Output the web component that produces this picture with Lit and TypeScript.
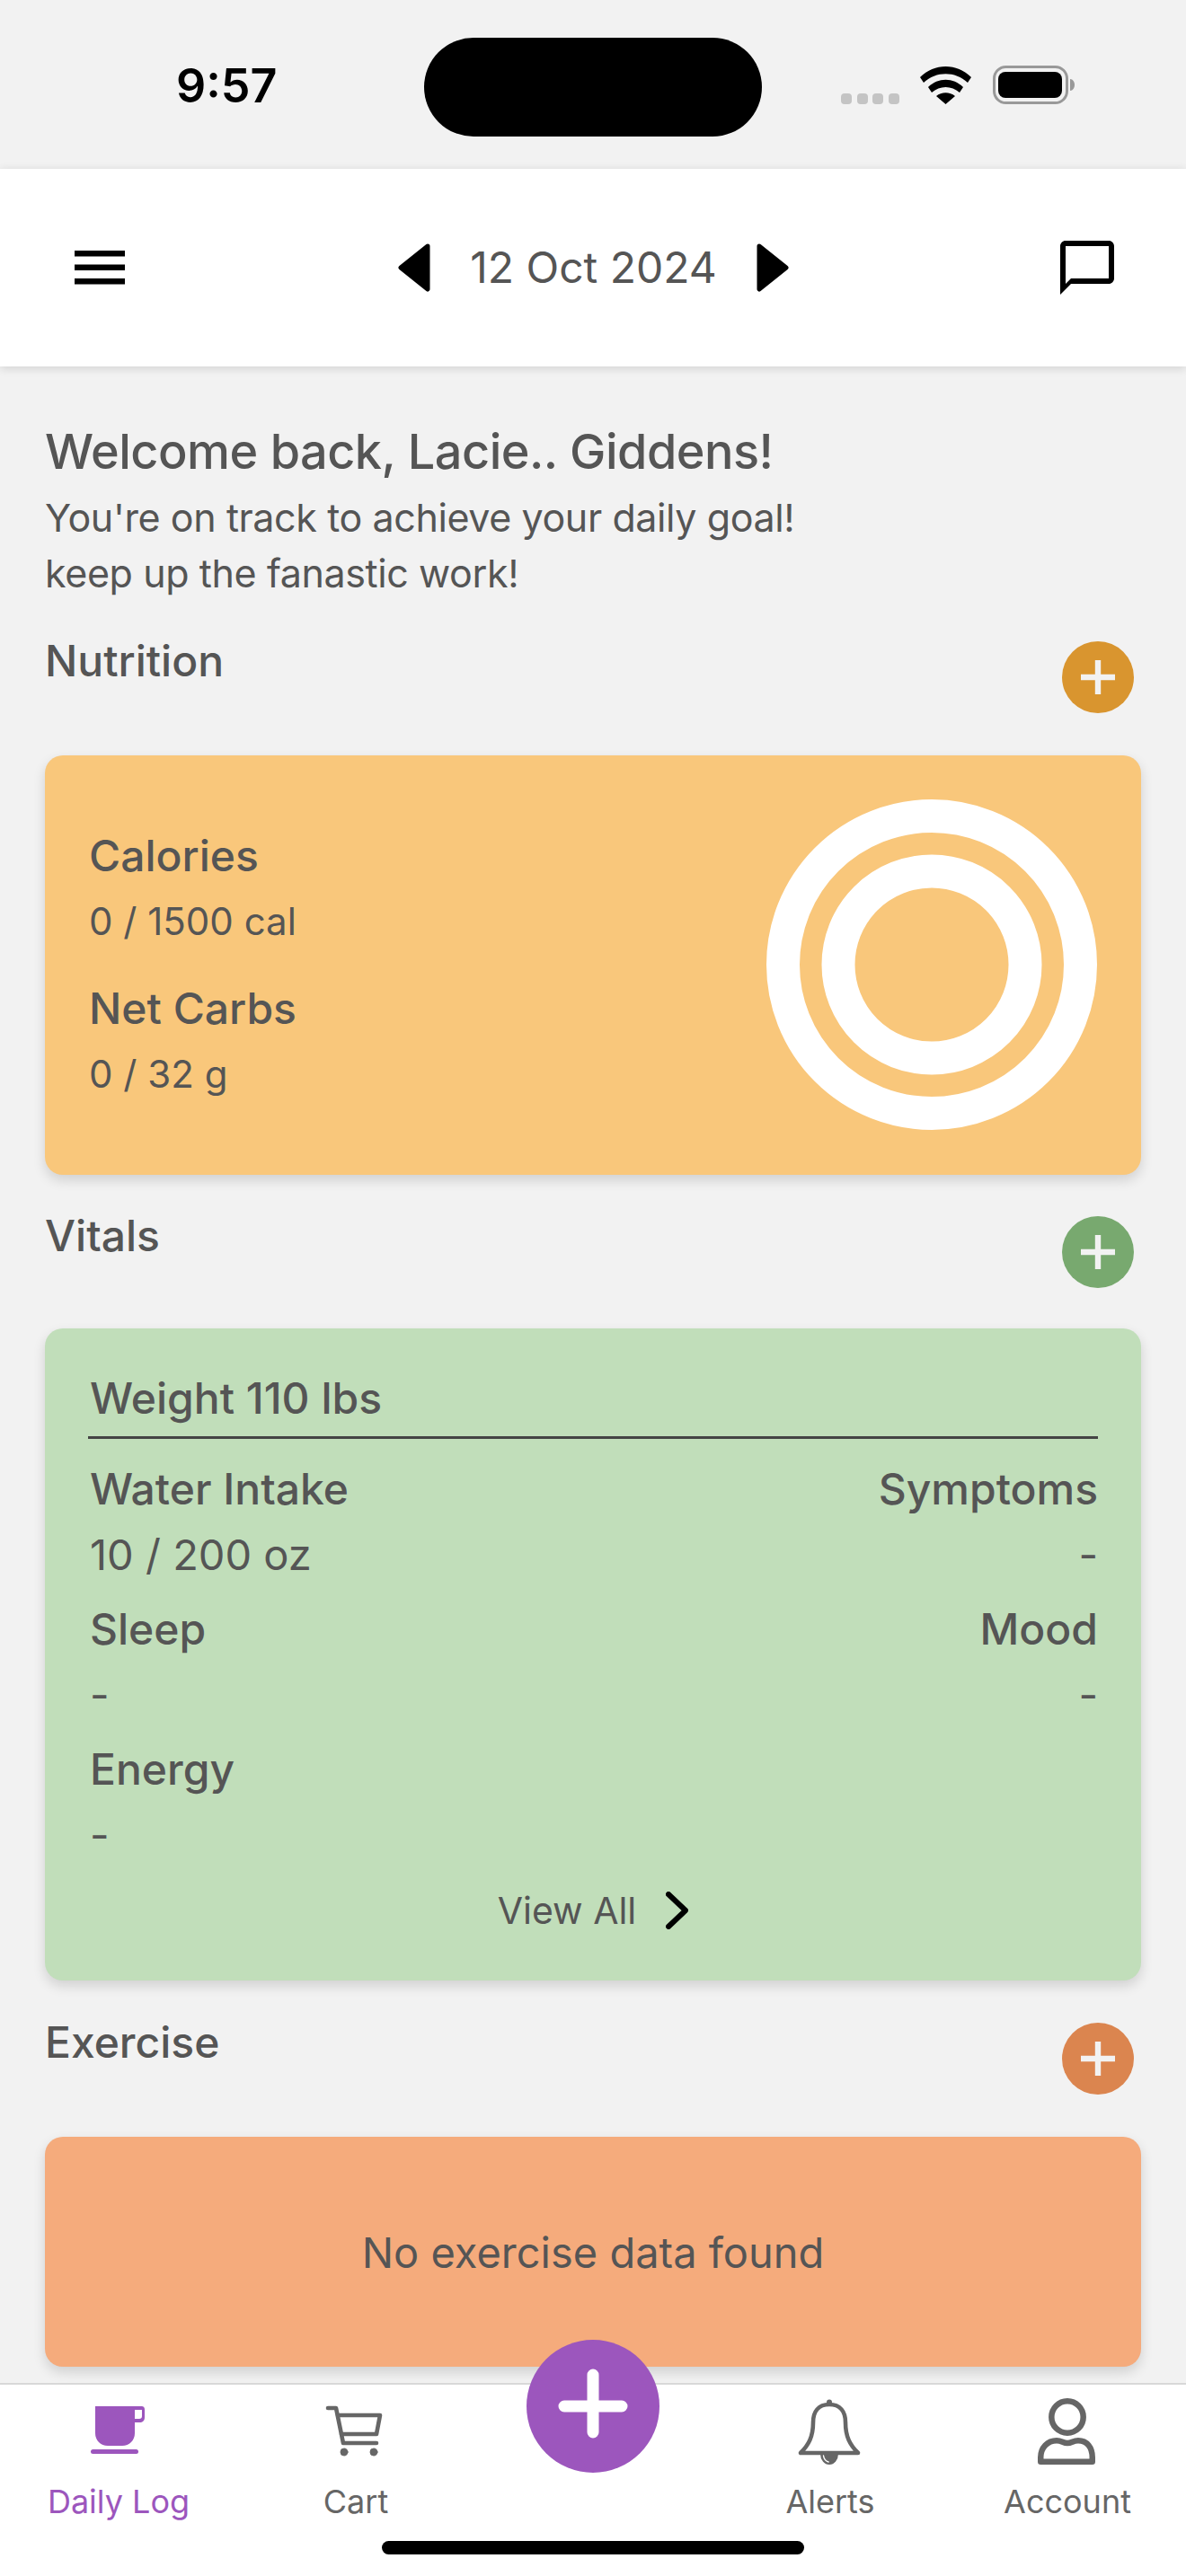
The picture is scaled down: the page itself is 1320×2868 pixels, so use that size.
import { LitElement, html, css, svg } from 'lit';
import { customElement } from 'lit/decorators.js';

const plus = svg`<path d="M20 10.5v19M10.5 20h19" stroke="#f2f2f2" stroke-width="3.2" fill="none" />`;

@customElement('app-root')
export class AppRoot extends LitElement {
  static styles = css`
    :host {
      display: block;
      width: 1320px;
      height: 2868px;
      position: relative;
      overflow: hidden;
      background: #f2f2f2;
      font-family: Inter, sans-serif;
      color: #555;
    }
    .page {
      display: flex;
      flex-direction: column;
      height: 2868px;
    }

    /* status bar */
    .status {
      height: 188px;
      flex: none;
      display: flex;
      position: relative;
      padding: 73px 121px 0 196px;
      box-sizing: border-box;
      justify-content: space-between;
    }
    .time {
      font-size: 52px;
      font-weight: 600;
      line-height: 46px;
      color: #000;
    }
    .island {
      position: absolute;
      left: 472px;
      top: 42px;
      width: 376px;
      height: 110px;
      border-radius: 55px;
      background: #000;
    }
    .status-icons {
      display: flex;
      align-items: flex-start;
    }
    .status-icons svg {
      display: block;
    }

    /* header */
    .header {
      height: 220px;
      flex: none;
      background: #fff;
      box-shadow: 0 2px 10px rgba(0, 0, 0, 0.14);
      display: flex;
      align-items: center;
      justify-content: space-between;
      padding: 0 74px 0 83px;
      box-sizing: border-box;
      position: relative;
      z-index: 1;
    }
    .header svg {
      display: block;
    }
    .date-nav {
      display: flex;
      align-items: center;
      gap: 44px;
      margin-left: 8px;
    }
    .date {
      font-size: 48px;
      line-height: 60px;
    }

    /* content */
    .content {
      flex: 1;
      min-height: 0;
      overflow: hidden;
      padding: 64px 50px 0;
    }
    h1 {
      margin: 0;
      font-size: 54px;
      font-weight: 500;
      line-height: 62px;
      letter-spacing: -0.5px;
    }
    .intro {
      margin: 11px 0 37px;
      font-size: 43px;
      line-height: 62px;
      letter-spacing: -0.4px;
    }
    .section-head {
      display: flex;
      justify-content: space-between;
      align-items: flex-start;
      margin-bottom: 47px;
      padding-right: 8px;
    }
    .section-title {
      font-size: 48px;
      font-weight: 500;
      line-height: 60px;
    }
    .add {
      width: 80px;
      height: 80px;
      margin-top: 8px;
      border-radius: 50%;
      display: block;
    }
    .card {
      border-radius: 20px;
      box-shadow: 0 6px 14px rgba(0, 0, 0, 0.14);
      box-sizing: border-box;
      margin-bottom: 38px;
    }
    .label {
      font-size: 48px;
      font-weight: 500;
      line-height: 60px;
    }
    .value {
      font-size: 47px;
      line-height: 60px;
    }

    .nutrition {
      background: #f9c77b;
      height: 467px;
      padding: 0 49px;
      display: flex;
      align-items: center;
      justify-content: space-between;
    }
    .nutrition .value {
      font-size: 42px;
      margin: 13px 0 37px;
    }
    .nutrition .stat:last-child .value {
      margin-bottom: 0;
    }
    .ring {
      display: block;
      margin-top: -2px;
    }

    .vitals-head {
      margin-bottom: 45px;
    }
    .vitals {
      background: #c1deba;
      height: 726px;
      margin-bottom: 39px;
      padding: 48px 48px 0;
    }
    .weight {
      padding-left: 2px;
      padding-bottom: 12px;
      border-bottom: 3px solid #444;
      margin-bottom: 26px;
    }
    .vitals-grid {
      display: grid;
      grid-template-columns: 1fr 1fr;
      row-gap: 23px;
      padding-left: 2px;
    }
    .vitals .value {
      margin-top: 13px;
    }
    .right {
      text-align: right;
    }
    .view-all {
      display: flex;
      align-items: center;
      justify-content: center;
      gap: 33px;
      margin-top: 24px;
      font-size: 41px;
      line-height: 60px;
    }
    .view-all svg {
      display: block;
    }

    .exercise-head {
      margin-bottom: 47px;
    }
    .exercise {
      background: #f5ab7c;
      height: 256px;
      display: flex;
      align-items: center;
      justify-content: center;
      font-size: 47px;
      margin-bottom: 0;
    }

    /* tab bar */
    .tabs {
      height: 215px;
      flex: none;
      background: #fff;
      border-top: 2px solid #d8d8d8;
      box-sizing: border-box;
      display: grid;
      grid-template-columns: repeat(5, 1fr);
      position: relative;
      z-index: 2;
    }
    .tab {
      display: flex;
      flex-direction: column;
      align-items: center;
      padding-top: 15px;
      font-size: 36px;
      line-height: 46px;
      color: #666;
    }
    .tab.active {
      color: #9c56bd;
    }
    .tab svg {
      display: block;
      width: 78px;
      height: 78px;
      margin-bottom: 14px;
    }
    .fab {
      position: absolute;
      left: 586px;
      top: -50px;
      width: 148px;
      height: 148px;
      border-radius: 50%;
      background: #9c56bd;
    }
    .home-bar {
      position: absolute;
      left: 425px;
      bottom: 24px;
      width: 470px;
      height: 15px;
      border-radius: 8px;
      background: #000;
    }
  `;

  addButton(color: string) {
    return html`<svg class="add" viewBox="0 0 40 40" style="background:${color}">${plus}</svg>`;
  }

  render() {
    return html`
      <div class="page">
        <div class="status">
          <div class="time">9:57</div>
          <div class="island"></div>
          <div class="status-icons">
            <svg width="263" height="46" viewBox="0 0 263 46">
              <g fill="#c4c4c4">
                <rect x="0" y="31" width="12" height="12" rx="4" />
                <rect x="18" y="31" width="12" height="12" rx="4" />
                <rect x="35" y="31" width="12" height="12" rx="4" />
                <rect x="53" y="31" width="12" height="12" rx="4" />
              </g>
              <path
                d="M88 13 C104 -3 129 -3 145 13 L141 19 C127 6 106 6 92 19 Z M97 24 C108 13 125 13 136 24 L132 30 C123 22 110 22 101 30 Z M106 34 C112 29 121 29 127 34 L116.5 43 Z"
                fill="#000"
              />
              <rect x="170.5" y="1.5" width="81" height="40" rx="13" fill="none" stroke="#999" stroke-width="3" />
              <rect x="175" y="7" width="71" height="29" rx="8" fill="#000" />
              <path d="M255 15 c3 0 5 3 5 6.5 s-2 6.5-5 6.5 z" fill="#999" />
            </svg>
          </div>
        </div>

        <div class="header">
          <svg width="56" height="38" viewBox="0 0 56 38">
            <path d="M0 0h56v6.5H0zM0 15.5h56V22H0zM0 31h56v6.5H0z" fill="#000" />
          </svg>
          <div class="date-nav">
            <svg width="36" height="54" viewBox="0 0 36 54">
              <path d="M33 3 L3 27 L33 51 Z" fill="#000" stroke="#000" stroke-width="5" stroke-linejoin="round" />
            </svg>
            <span class="date">12 Oct 2024</span>
            <svg width="36" height="54" viewBox="0 0 36 54">
              <path d="M3 3 L33 27 L3 51 Z" fill="#000" stroke="#000" stroke-width="5" stroke-linejoin="round" />
            </svg>
          </div>
          <svg width="72" height="72" viewBox="0 0 24 24">
            <path
              d="M20 2H4c-1.1 0-2 .9-2 2v18l4-4h14c1.1 0 2-.9 2-2V4c0-1.1-.9-2-2-2zm0 14H6l-2 2V4h16v12z"
              fill="#000"
            />
          </svg>
        </div>

        <div class="content">
          <h1>Welcome back, Lacie.. Giddens!</h1>
          <p class="intro">You're on track to achieve your daily goal!<br />keep up the fanastic work!</p>

          <div class="section-head">
            <span class="section-title">Nutrition</span>
            ${this.addButton('#d9952f')}
          </div>
          <div class="card nutrition">
            <div>
              <div class="stat">
                <div class="label">Calories</div>
                <div class="value">0 / 1500 cal</div>
              </div>
              <div class="stat">
                <div class="label">Net Carbs</div>
                <div class="value">0 / 32 g</div>
              </div>
            </div>
            <svg class="ring" width="368" height="368" viewBox="0 0 368 368" fill="none" stroke="#fff" stroke-width="37">
              <circle cx="184" cy="184" r="165.5" />
              <circle cx="184" cy="184" r="104" />
            </svg>
          </div>

          <div class="section-head vitals-head">
            <span class="section-title">Vitals</span>
            ${this.addButton('#78a96f')}
          </div>
          <div class="card vitals">
            <div class="label weight">Weight 110 lbs</div>
            <div class="vitals-grid">
              <div>
                <div class="label">Water Intake</div>
                <div class="value">10 / 200 oz</div>
              </div>
              <div class="right">
                <div class="label">Symptoms</div>
                <div class="value">-</div>
              </div>
              <div>
                <div class="label">Sleep</div>
                <div class="value">-</div>
              </div>
              <div class="right">
                <div class="label">Mood</div>
                <div class="value">-</div>
              </div>
              <div>
                <div class="label">Energy</div>
                <div class="value">-</div>
              </div>
            </div>
            <div class="view-all">
              <span>View All</span>
              <svg width="25" height="42" viewBox="0 0 25 42">
                <path d="M3 3 L22 21 L3 39" fill="none" stroke="#000" stroke-width="6" stroke-linecap="round" stroke-linejoin="round" />
              </svg>
            </div>
          </div>

          <div class="section-head exercise-head">
            <span class="section-title">Exercise</span>
            ${this.addButton('#db854f')}
          </div>
          <div class="card exercise">No exercise data found</div>
        </div>

        <div class="tabs">
          <div class="tab active">
            <svg viewBox="0 0 78 78">
              <path
                d="M13 9 H64 C67 9 68 10 68 13 V21 C68 25 66 27 62 27 H57 V39 C57 47 51 53 43 53 H27 C19 53 13 47 13 39 Z M57 13 V23 H62 C64 23 65 22 65 20 V13 Z"
                fill="#9c56bd"
                fill-rule="evenodd"
              />
              <rect x="8" y="57" width="53" height="5" rx="2.5" fill="#9c56bd" />
            </svg>
            Daily Log
          </div>
          <div class="tab">
            <svg viewBox="0 0 78 78" fill="none" stroke="#666" stroke-width="4.6" stroke-linecap="round" stroke-linejoin="round">
              <path d="M8 11 H17 L25 50 H62" />
              <path d="M19 19 H66 L62 40 H23" />
              <circle cx="26" cy="60" r="4" fill="#666" stroke-width="1" />
              <circle cx="59" cy="60" r="4" fill="#666" stroke-width="1" />
            </svg>
            Cart
          </div>
          <div></div>
          <div class="tab">
            <svg viewBox="0 0 78 78" fill="none" stroke="#666" stroke-width="4.6" stroke-linecap="round" stroke-linejoin="round">
              <circle cx="38" cy="4.5" r="3" fill="#666" stroke="none" />
              <path d="M38 7 C26 7 20 15 20 27 C20 43 15 52 6 61 H70 C61 52 56 43 56 27 C56 15 50 7 38 7 Z" />
              <path d="M28 62 A10 12 0 0 0 48 62 Z" fill="#666" stroke="none" />
              <path d="M31.5 64 C32 68 34 70 37 71" stroke="#fff" stroke-width="1.4" />
            </svg>
            Alerts
          </div>
          <div class="tab">
            <svg viewBox="0 0 78 78" fill="none" stroke="#666" stroke-width="6.5" stroke-linejoin="round">
              <circle cx="39" cy="21" r="17.7" />
              <path d="M9.25 66 C9.25 55 17 47.25 27 47.25 C33 47.25 34 50 39 50 C44 50 45 47.25 51 47.25 C61 47.25 66.75 55 66.75 66 V70.75 H9.25 Z" />
            </svg>
            Account
          </div>
          <svg class="fab" viewBox="0 0 148 148">
            <path d="M74 39 V103 M42 74 H106" stroke="#fff" stroke-width="13" stroke-linecap="round" fill="none" />
          </svg>
          <div class="home-bar"></div>
        </div>
      </div>
    `;
  }
}
